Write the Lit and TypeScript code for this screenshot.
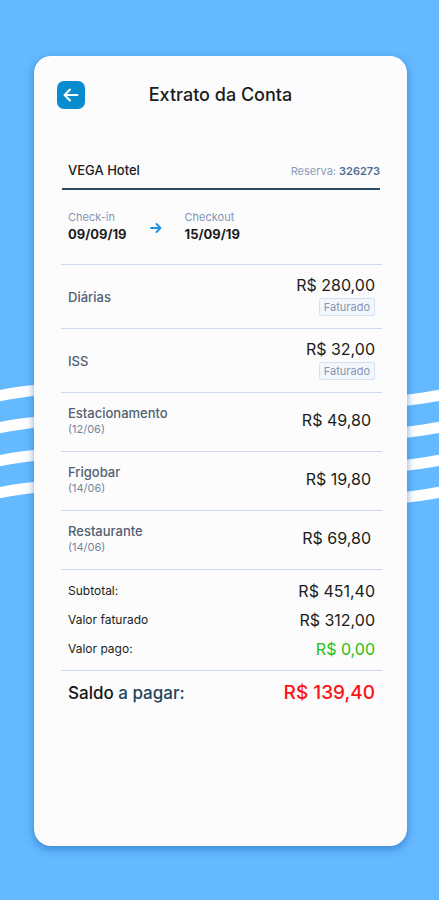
import { LitElement, html, css, svg, nothing } from "lit";
import { customElement } from "lit/decorators.js";

interface Charge {
  label: string;
  date?: string;
  amount: string;
  billed?: boolean;
}

const charges: Charge[] = [
  { label: "Diárias", amount: "R$ 280,00", billed: true },
  { label: "ISS", amount: "R$ 32,00", billed: true },
  { label: "Estacionamento", date: "(12/06)", amount: "R$ 49,80" },
  { label: "Frigobar", date: "(14/06)", amount: "R$ 19,80" },
  { label: "Restaurante", date: "(14/06)", amount: "R$ 69,80" },
];

const stripeOffsets = [0, 32, 65, 97];

@customElement("app-root")
export class AppRoot extends LitElement {
  static styles = css`
    :host {
      display: block;
      font-family: Inter, "Open Sans", sans-serif;
      color: #1b1c20;
    }
    * {
      box-sizing: border-box;
    }
    .page {
      position: relative;
      min-height: 100vh;
      padding: 56px 32px 54px 34px;
      background: #64b9ff;
      display: flex;
      overflow: hidden;
    }
    .waves {
      position: absolute;
      left: 0;
      top: 380px;
      width: 100%;
      height: 130px;
    }
    .card {
      position: relative;
      flex: 1;
      min-width: 0;
      background: #fcfcfc;
      border-radius: 17px;
      box-shadow: 0 3px 8px rgba(20, 90, 170, 0.55);
      padding: 25px 25px 32px 27px;
    }
    .top {
      display: grid;
      grid-template-columns: 28px 1fr 28px;
      align-items: center;
      margin: 0 -2px 0 -4px;
    }
    .back {
      width: 28px;
      height: 28px;
      padding: 0;
      border: 0;
      border-radius: 7px;
      background: #088ccf;
      display: grid;
      place-items: center;
      cursor: pointer;
    }
    h1 {
      margin: 0;
      font-size: 18px;
      line-height: 28px;
      font-weight: 500;
      text-align: center;
    }
    .hotel {
      display: flex;
      justify-content: space-between;
      align-items: center;
      margin: 50px 2px 0 1px;
      padding: 0 0 7px 6px;
      height: 31px;
      border-bottom: 2px solid #2b4a66;
    }
    h2 {
      margin: 0;
      font-size: 13px;
      line-height: 20px;
      font-weight: 500;
    }
    .reservation {
      padding-top: 2px;
      font-size: 11px;
      line-height: 20px;
      color: #8b9bb8;
    }
    .reservation b {
      font-weight: 600;
      color: #526c98;
    }
    .stay {
      display: flex;
      align-items: flex-start;
      gap: 23px;
      margin: 0;
      padding: 19px 7px 0;
      height: 74px;
    }
    .stay dt {
      font-size: 11px;
      line-height: 16px;
      color: #8496b5;
    }
    .stay dd {
      margin: 0;
      font-size: 13px;
      line-height: 18px;
      font-weight: 700;
    }
    .stay svg {
      margin-top: 13px;
    }
    table {
      width: 100%;
      border-collapse: separate;
      border-spacing: 0;
    }
    th,
    td {
      padding: 0 7px;
      font-weight: 400;
    }
    th {
      text-align: left;
    }
    td {
      text-align: right;
      font-size: 16px;
      line-height: 20px;
    }
    .charge th,
    .charge td,
    .sums tr:first-child td,
    .balance th,
    .balance td {
      border-top: 1px solid #cddaee;
    }
    .charge {
      height: 59px;
    }
    .charge.billed {
      height: 64px;
    }
    .charge th {
      padding-bottom: 2px;
      font-size: 13px;
      line-height: 16px;
      font-weight: 500;
      color: #526173;
    }
    .charge.billed th {
      padding-bottom: 0;
    }
    .charge td {
      padding-right: 11px;
      padding-bottom: 4px;
    }
    .charge.billed td {
      padding-right: 7px;
      padding-bottom: 3px;
    }
    .date {
      display: block;
      font-size: 11px;
      line-height: 16px;
      font-weight: 400;
      color: #7486a3;
    }
    .badge {
      display: block;
      width: fit-content;
      margin: 3px 0 0 auto;
      padding: 0 4px;
      border: 1px solid #d5e0f2;
      border-radius: 2px;
      background: #f2f6fd;
      font-size: 11px;
      line-height: 16px;
      color: #8495b3;
    }
    .sum {
      height: 29px;
    }
    .sum th {
      font-size: 12px;
      line-height: 16px;
    }
    .gap {
      height: 7px;
    }
    .gap td {
      line-height: 0;
    }
    .sum .paid {
      color: #27c012;
    }
    .balance {
      height: 44px;
    }
    .balance th {
      font-size: 17px;
      line-height: 24px;
      font-weight: 500;
      color: #24445c;
    }
    .balance th span {
      color: #15161a;
    }
    .balance td {
      font-size: 19px;
      line-height: 24px;
      font-weight: 500;
      color: #fb1212;
    }
  `;

  render() {
    return html`
      <div class="page">
        <svg class="waves" viewBox="0 0 439 130" preserveAspectRatio="none" aria-hidden="true">
          ${stripeOffsets.map(
            (y) => svg`<g transform="translate(0 ${y})" fill="none" stroke="#fff" stroke-width="11">
              <path d="M-2 16Q16 12 40 10" /><path d="M400 21Q420 19 441 15" />
            </g>`
          )}
        </svg>
        <main class="card">
          <header class="top">
            <button class="back" type="button" aria-label="Voltar">
              <svg width="18" height="18" viewBox="0 0 18 18" fill="none" stroke="#fff" stroke-width="2" stroke-linecap="round" stroke-linejoin="round">
                <path d="M15.500 9H3M8 3.500L2.500 9L8 14.500" />
              </svg>
            </button>
            <h1>Extrato da Conta</h1>
          </header>
          <section class="hotel">
            <h2>VEGA Hotel</h2>
            <span class="reservation">Reserva: <b>326273</b></span>
          </section>
          <dl class="stay">
            <div><dt>Check-in</dt><dd>09/09/19</dd></div>
            <svg width="12" height="12" viewBox="0 0 12 12" fill="none" stroke="#1b8fdc" stroke-width="1.800" stroke-linecap="round" stroke-linejoin="round" aria-hidden="true">
              <path d="M1 6h9.500M6.500 2L10.500 6l-4 4" />
            </svg>
            <div><dt>Checkout</dt><dd>15/09/19</dd></div>
          </dl>
          <table>
            <tbody>
              ${charges.map(
                (c) => html`<tr class="charge ${c.billed ? "billed" : ""}">
                  <th scope="row">${c.label}${c.date ? html`<span class="date">${c.date}</span>` : nothing}</th>
                  <td>${c.amount}${c.billed ? html`<span class="badge">Faturado</span>` : nothing}</td>
                </tr>`
              )}
            </tbody>
            <tbody class="sums">
              <tr class="gap"><td colspan="2"></td></tr>
              <tr class="sum"><th scope="row">Subtotal:</th><td>R$ 451,40</td></tr>
              <tr class="sum"><th scope="row">Valor faturado</th><td>R$ 312,00</td></tr>
              <tr class="sum"><th scope="row">Valor pago:</th><td class="paid">R$ 0,00</td></tr>
              <tr class="gap"><td colspan="2"></td></tr>
            </tbody>
            <tfoot>
              <tr class="balance"><th scope="row"><span>Saldo</span> a pagar:</th><td>R$ 139,40</td></tr>
            </tfoot>
          </table>
        </main>
      </div>
    `;
  }
}
